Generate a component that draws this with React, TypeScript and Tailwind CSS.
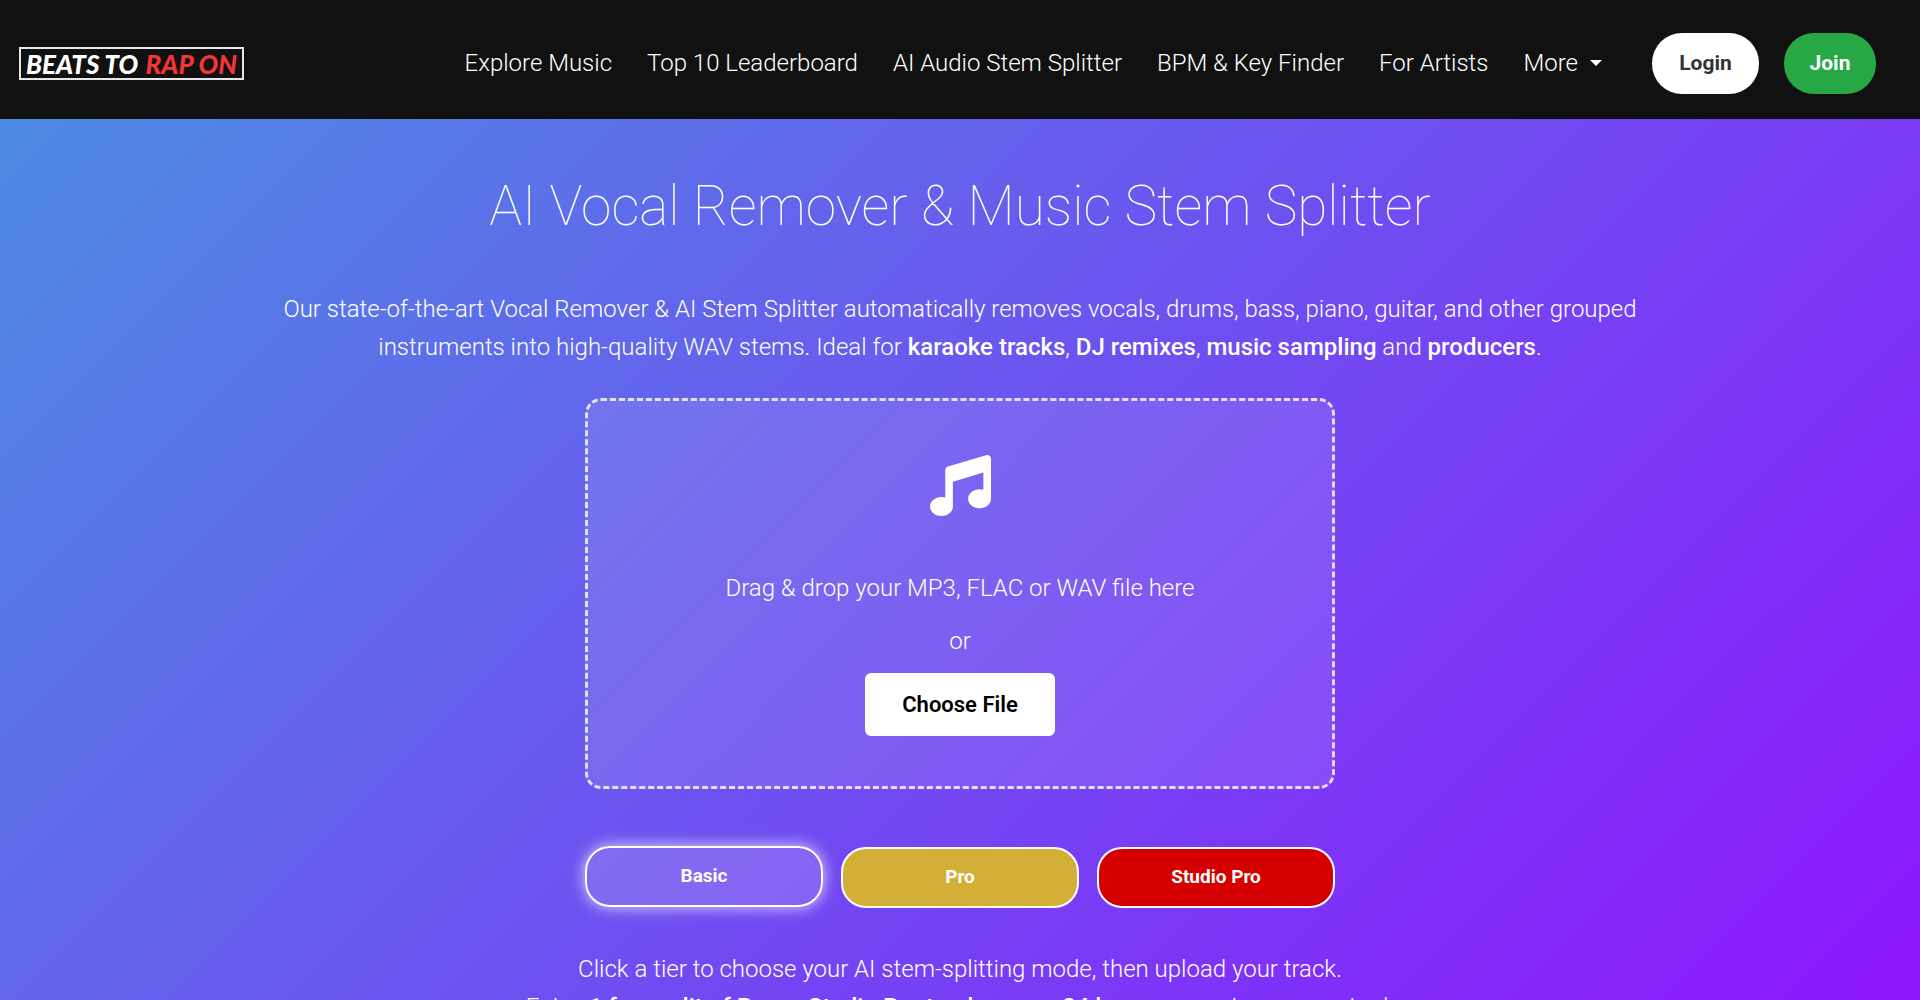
import type { ReactNode } from 'react';
import { FaMusic } from 'react-icons/fa6';

const navLinks = [
  'Explore Music',
  'Top 10 Leaderboard',
  'AI Audio Stem Splitter',
  'BPM & Key Finder',
  'For Artists',
];

const tiers = [
  { name: 'Basic', style: 'bg-white/15 mb-px shadow-[0_0_15px_rgba(255,255,255,0.8)]' },
  { name: 'Pro', style: 'bg-[#d4af37] mt-px' },
  { name: 'Studio Pro', style: 'bg-[#d60000] mt-px' },
];

function Logo() {
  return (
    <a
      href="#"
      className="flex h-[33px] w-[225px] items-center justify-between border-2 border-white/90 px-[5px] font-['Lato',sans-serif] text-[26px] leading-none font-black whitespace-nowrap italic"
    >
      <span>BEATS TO</span>
      <span className="text-[#f23535]">RAP ON</span>
    </a>
  );
}

function Header() {
  return (
    <header className="flex items-center justify-between bg-[#111] pt-[33px] pr-11 pb-[25px] pl-[19px]">
      <Logo />
      <div className="flex items-center">
        <nav className="flex items-center gap-[35px] pb-0.5 text-2xl font-light">
          {navLinks.map((label) => (
            <a key={label} href="#">{label}</a>
          ))}
          <button className="flex items-center gap-3 font-light">
            More
            <span className="border-x-[6px] border-t-[6px] border-x-transparent border-t-white" />
          </button>
        </nav>
        <div className="ml-[50px] flex gap-[25px] text-[21px] font-bold">
          <button className="h-[61px] w-[107px] rounded-[30px] bg-white text-[#333]">Login</button>
          <button className="h-[61px] w-[92px] rounded-[30px] bg-[#28a745]">Join</button>
        </div>
      </div>
    </header>
  );
}

function Strong({ children }: { children: ReactNode }) {
  return <strong className="font-medium">{children}</strong>;
}

export default function App() {
  return (
    <div className="min-h-screen bg-[linear-gradient(135deg,#4a90e2,#9013fe)] font-['Roboto',sans-serif] text-white">
      <Header />
      <main className="px-6 pt-[54px] pb-10 text-center">
        <h1 className="text-[55px] leading-[66px] font-thin">AI Vocal Remover &amp; Music Stem Splitter</h1>
        <p className="mx-auto mt-[51px] max-w-[1400px] text-2xl leading-[38px] font-light">
          Our state-of-the-art Vocal Remover &amp; AI Stem Splitter automatically removes vocals, drums, bass, piano, guitar, and other grouped
          <br />
          instruments into high-quality WAV stems. Ideal for <Strong>karaoke tracks</Strong>, <Strong>DJ remixes</Strong>,{' '}
          <Strong>music sampling</Strong> and <Strong>producers</Strong>.
        </p>
        <section className="mx-auto mt-8 flex max-w-[750px] flex-col items-center rounded-2xl border-[3px] border-dashed border-white/80 bg-white/10 pt-[54px] pb-[50px]">
          <FaMusic className="size-[61px]" />
          <p className="mt-[53px] text-2xl leading-[38px] font-light">Drag &amp; drop your MP3, FLAC or WAV file here</p>
          <p className="mt-[15px] text-2xl leading-[38px] font-light">or</p>
          <button className="mt-[13px] h-[63px] w-[190px] rounded-md bg-white text-[22px] font-semibold text-black">Choose File</button>
        </section>
        <div className="mx-auto mt-[57px] grid max-w-[750px] grid-cols-3 gap-[18px]">
          {tiers.map((tier) => (
            <button key={tier.name} className={`h-[61px] rounded-[25px] border-2 border-white text-[19px] font-bold ${tier.style}`}>
              {tier.name}
            </button>
          ))}
        </div>
        <p className="mt-[42px] text-2xl leading-[38px] font-light">
          Click a tier to choose your AI stem-splitting mode, then upload your track.
          <br />
          Enjoy <Strong>1 free split of Pro or Studio Pro tracks every 24 hours</Strong> — no sign-up required.
        </p>
      </main>
    </div>
  );
}
